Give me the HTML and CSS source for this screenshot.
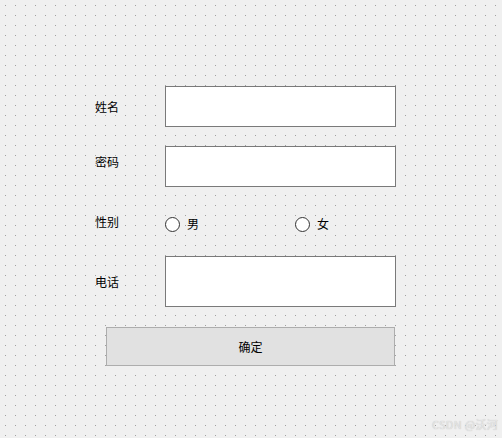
FILE: index.html
```html
<!DOCTYPE html>
<html lang="zh">
<head>
<meta charset="utf-8">
<title>表单</title>
<link rel="stylesheet" href="styles.css">
</head>
<body>
<div class="canvas">
  <form class="form">
    <div class="grid">
      <label class="label">姓名</label>
      <div class="field"></div>
      <label class="label label-up">密码</label>
      <div class="field"></div>
      <label class="label">性别</label>
      <div class="radios">
        <span class="radio"><span class="circle"></span><span class="rtext">男</span></span>
        <span class="radio"><span class="circle"></span><span class="rtext">女</span></span>
      </div>
      <label class="label">电话</label>
      <div class="field field-tall"></div>
    </div>
    <div class="button">确定</div>
  </form>
  <div class="watermark">CSDN @沃河</div>
</div>
</body>
</html>
```

FILE: styles.css
```css
html, body {
  margin: 0;
  padding: 0;
}
body {
  width: 502px;
  height: 438px;
  overflow: hidden;
  background-color: #f0f0f0;
  font-family: "Noto Sans CJK SC", "Noto Sans", sans-serif;
  font-size: 12px;
  color: #000;
}
.canvas {
  position: relative;
  width: 502px;
  height: 438px;
  background-color: #f0f0f0;
  background-image: radial-gradient(circle at 5.5px 5.5px, #a0a0a0 0.6px, rgba(160,160,160,0) 0.9px);
  background-size: 10px 10px;
}
.form {
  margin: 0;
  padding: 86px 0 0 95px;
  display: flex;
  flex-direction: column;
}
.grid {
  display: grid;
  grid-template-columns: 70px 231px;
  grid-template-rows: 41px 41px 31px 51px;
  row-gap: 19px;
}
.label {
  align-self: center;
  line-height: 14px;
}
.label-up {
  margin-bottom: 9px;
}
.field {
  background: #fff;
  border: 1px solid #7a7a7a;
  box-sizing: border-box;
}
.field-tall {
  height: 51px;
}
.radios {
  display: flex;
  align-items: center;
  padding-top: 5px;
}
.radio {
  display: flex;
  align-items: center;
  flex: 0 0 auto;
}
.radio:first-child {
  width: 130px;
}
.circle {
  flex: 0 0 auto;
  width: 15px;
  height: 15px;
  box-sizing: border-box;
  border: 1px solid #333;
  border-radius: 50%;
  background: #fff;
  margin-right: 7px;
}
.rtext {
  line-height: 14px;
  margin-bottom: 1px;
}
.button {
  margin: 20px 0 0 11px;
  width: 289px;
  height: 39px;
  box-sizing: border-box;
  background: #e1e1e1;
  border: 1px solid #adadad;
  display: flex;
  align-items: center;
  justify-content: center;
}
.watermark {
  position: absolute;
  right: 4px;
  bottom: 6px;
  font-size: 11px;
  letter-spacing: 0.3px;
  color: #e6e6e6;
  text-shadow: 0 0 1px #b8b8b8;
  font-family: "Noto Sans CJK SC", "Noto Sans", sans-serif;
}
```
